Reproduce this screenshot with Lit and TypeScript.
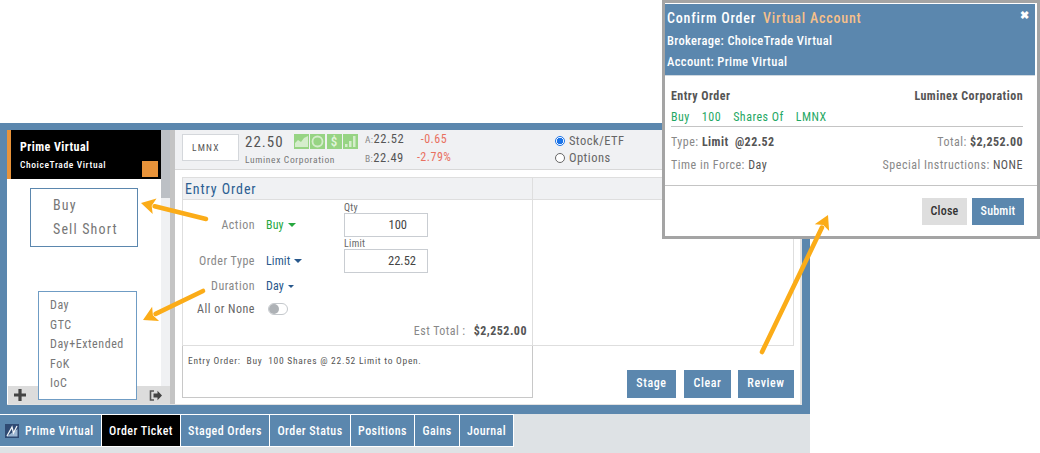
import { LitElement, html, css, svg } from "lit";
import { customElement } from "lit/decorators.js";

const TABS: [string, number][] = [["Order Ticket", 79], ["Staged Orders", 89], ["Order Status", 81], ["Positions", 64], ["Gains", 45], ["Journal", 54]];

@customElement("app-root")
export class AppRoot extends LitElement {
  static styles = css`
    :host {
      display: block;
      position: relative;
      width: 1040px;
      height: 453px;
      overflow: hidden;
      background: #fff;
      font-family: Roboto, "Liberation Sans", sans-serif;
      font-stretch: 78%;
      font-size: 12px;
      letter-spacing: 0.5px;
      color: #666;
    }
    * { box-sizing: border-box; }
    .app { width: 810px; padding-top: 123px; }
    .frame {
      height: 291px;
      background: #5b87ae;
      padding: 7px 8px 9px 7px;
    }
    .inner { display: flex; height: 100%; background: #fff; border-right: 2px solid #e2e2e2; border-bottom: 1px solid #e2e2e2; }
    .side { width: 163px; display: flex; flex-direction: column; flex: none; position: relative; }
    .acct {
      height: 49px;
      margin-right: 9px;
      background: #000;
      border-left: 4px solid #e8933a;
      padding: 9px 0 0 9px;
      color: #fff;
      position: relative;
    }
    .acct b { display: block; font-size: 12px; font-weight: 700; letter-spacing: .45px; line-height: 16px; }
    .acct span { display: block; font-size: 9.5px; font-weight: 500; letter-spacing: .6px; line-height: 15px; margin-top: 2px; }
    .acct i { position: absolute; right: 3px; bottom: 2px; width: 16px; height: 16px; background: #e8933a; }
    .scroll { position: absolute; right: 0; top: 0; bottom: 18px; width: 9px; background: #f0f1f3; }
    .scroll i { display: block; height: 68px; background: #bcc0c5; }
    .side-fill { flex: 1; }
    .side-foot {
      height: 18px;
      margin-left: 1px;
      background: #dcdcdc;
      display: flex;
      align-items: center;
      justify-content: space-between;
      padding: 0 8px 0 6px;
    }
    .gutter { width: 5px; flex: none; background: #c4c4c4; }
    .main { flex: 1; display: flex; flex-direction: column; min-width: 0; }
    .quote {
      height: 40px;
      flex: none;
      background: #f0f1f3;
      border-bottom: 1px solid #d8d8d8;
      display: flex;
      align-items: flex-start;
    }
    .sym {
      width: 57px; height: 27px; margin: 4px 6px 0 7px; flex: none;
      background: #fff; border: 1px solid #d4d7db;
      font-size: 9.5px; line-height: 25px; padding-left: 9px; letter-spacing: 1.2px; color: #555;
    }
    .px { padding-top: 3px; width: 49px; flex: none; }
    .px b { display: block; font-weight: 400; font-size: 15px; line-height: 18px; color: #555; letter-spacing: 1px; white-space: nowrap; }
    .px span { display: block; font-size: 9.5px; line-height: 12px; margin-top: 3px; letter-spacing: .65px; white-space: nowrap; color: #777; }
    .icons { display: flex; gap: 1.3px; margin: 4px 0 0 0; flex: none; }
    .icons div { width: 15px; height: 15px; background: #97d484; }
    .icons svg { display: block; }
    .ic-d { color: #e5f5df; font-size: 13px; line-height: 15px; text-align: center; letter-spacing: 0; font-weight: 500; }
    .bidask { margin: 0 0 0 7px; width: 52px; flex: none; font-size: 12.5px; line-height: 18px; color: #555; white-space: nowrap; }
    .bidask small { font-size: 9.5px; color: #888; }
    .chg { width: 34px; margin-top: 0; text-align: center; font-size: 12px; line-height: 18px; color: #e9705f; white-space: nowrap; flex: none; }
    .radios { margin: 2px 0 0 104px; line-height: 17px; font-size: 12.5px; color: #666; flex: none; }
    .radio { display: flex; align-items: center; gap: 4px; white-space: nowrap; }
    .dot { width: 10px; height: 10px; border-radius: 50%; border: 1px solid #666; display: block; background: #fff; }
    .dot.on { border-color: #1a73e8; background: radial-gradient(circle, #1a73e8 0 3px, #fff 3.5px); }
    .work { flex: 1; display: flex; padding: 7px 0 0 0; min-height: 0; }
    .ticket { width: 351px; margin-left: 7px; flex: none; display: flex; flex-direction: column; }
    .head {
      height: 23px; background: #f0f1f3; border: 1px solid #dedede; flex: none;
      font-size: 14px; line-height: 22px; padding-left: 2px; color: #2c5f92; letter-spacing: .9px; font-weight: 400;
    }
    .form { height: 146px; border-right: 1px solid #dedede; border-left: 1px solid #dedede; border-bottom: 1px solid #dedede; position: relative; flex: none; }
    .rows { display: flex; flex-direction: column; padding-top: 13px; }
    .row { display: flex; align-items: center; height: 24px; }
    .lab { width: 72px; text-align: right; color: #888; white-space: nowrap; }
    .val { margin-left: 11px; display: flex; align-items: center; gap: 4px; color: #28588c; font-size: 12px; letter-spacing: .1px; }
    .val.g { color: #27a83f; }
    .caret { width: 0; height: 0; border: 4px solid transparent; border-top-color: currentColor; border-bottom: 0; }
    .caret.sm { border-width: 3px 3px 0; }
    .toggle { margin-left: 13px; width: 20px; height: 12px; border: 1px solid #c4c8cc; border-radius: 6px; position: relative; background: #fff; }
    .toggle::before { content: ""; position: absolute; left: 0; top: 0; width: 10px; height: 10px; border-radius: 50%; background: #aeb2b6; }
    .m12 { margin-top: 12px; } .m1 { margin-top: 1px; } .mn1 { margin-top: -1px; }
    .dark { color: #666; }
    .entry { position: absolute; left: 161px; top: 2px; width: 84px; }
    .entry label { display: block; font-size: 10px; line-height: 11px; color: #666; letter-spacing: .3px; }
    .entry .in { height: 24px; border: 1px solid #c9cdd2; font-size: 12.5px; text-align: right; line-height: 22px; padding-right: 20px; color: #444; letter-spacing: 0; background: #fff; }
    .entry .in.l { padding-right: 11px; }
    .entry .in + label { margin-top: 1px; }
    .total { position: absolute; right: 5px; bottom: 7px; color: #888; display: flex; gap: 8px; font-size: 12px; letter-spacing: .45px; }
    .total b { color: #555; font-weight: 700; letter-spacing: .5px; }
    .summary { height: 52px; border: 1px solid #c8c8c8; border-top: 0; font-size: 9.5px; padding: 9px 5px; color: #555; letter-spacing: .72px; white-space: nowrap; flex: none; }
    .right { flex: 1; display: flex; flex-direction: column; position: relative; margin-right: 6px; }
    .right .h { height: 23px; background: #f0f1f3; border: 1px solid #dedede; border-left: 0; flex: none; }
    .right .b { height: 146px; border-right: 1px solid #dedede; border-bottom: 1px solid #dedede; flex: none; }
    .actions { position: absolute; right: 0; bottom: 6px; display: flex; gap: 8px; }
    .btn {
      height: 28px; padding-bottom: 2px; background: #5b87ae; color: #fff; font-size: 12px; font-weight: 500;
      display: flex; align-items: center; justify-content: center; letter-spacing: .6px;
    }
    .b-stage { width: 49px; } .b-clear { width: 47px; } .b-review { width: 56px; margin-left: -1px; }
    .tabs { height: 39px; background: #dee2e5; display: flex; align-items: flex-start; }
    .tab {
      height: 33px; background: #5b87ae; color: #fff; display: flex; align-items: center; justify-content: center;
      font-size: 12px; font-weight: 500; border: 1px solid #fff; border-width: 1px 1px 1px 0; letter-spacing: .45px; white-space: nowrap; flex: none;
    }
    .tab.first { width: 102px; justify-content: flex-start; padding-left: 5px; gap: 6px; }
    .tab.first svg { flex: none; }
    .tab.on { background: #000; }
    .pop { position: absolute; background: #fff; border: 1px solid #5b87ae; color: #777; }
    .pop1 { left: 30px; top: 188px; width: 108px; height: 59px; padding: 4px 0 0 22px; font-size: 14px; line-height: 24px; letter-spacing: 1.15px; }
    .pop2 { left: 38px; top: 291px; width: 99px; height: 109px; padding: 4px 0 0 11px; font-size: 12px; line-height: 19.6px; letter-spacing: .55px; border-color: #6f9cc4; }
    .arrows { position: absolute; inset: 0; pointer-events: none; }
    .modal {
      position: absolute; left: 662px; top: 0; width: 378px; height: 239px;
      background: #fff; border: 3px solid #a4a4a4;
      display: flex; flex-direction: column;
      padding: 1px 2px 0 0;
    }
    .mhead { height: 72px; background: #5b87ae; border-bottom: 1px solid #cfd8e0; color: #fff; padding: 5px 0 0 2px; position: relative; flex: none; font-weight: 500; }
    .mhead h3 { margin: 0; font-size: 14px; font-weight: 500; line-height: 18px; letter-spacing: .8px; display: flex; gap: 7px; }
    .mhead h3 span { color: #f6c08a; }
    .mhead div { font-size: 12.5px; line-height: 21px; letter-spacing: .35px; }
    .mhead h3 + div { margin-top: 3px; }
    .x { position: absolute; right: 6px; top: 1px; font-weight: 900; font-size: 11px !important; }
    .mbody { padding: 12px 14px 0 6px; flex: none; height: 110px; margin-right: -2px; border-bottom: 1px solid #c4c4c4; }
    .line { display: flex; justify-content: space-between; white-space: nowrap; }
    .line b { color: #555; font-weight: 700; letter-spacing: .45px; }
    .l1 { line-height: 16px; }
    .l2 { color: #1fa864; line-height: 17px; margin-top: 5px; display: flex; gap: 12px; letter-spacing: .5px; padding-bottom: 0; border-bottom: 1px solid #c4c4c4; }
    .l3 { margin-top: 7px; line-height: 17px; color: #888; }
    .l4 { margin-top: 6px; line-height: 17px; color: #888; }
    .dk { color: #555; }
    .mfoot { flex: 1; display: flex; justify-content: flex-end; align-items: flex-start; gap: 5px; padding: 12px 11px 0 0; }
    .mfoot div { height: 27px; padding-bottom: 1px; display: flex; align-items: center; justify-content: center; font-size: 12px; font-weight: 500; letter-spacing: .2px; }
    .close { width: 45px; background: #dedede; color: #333; }
    .submit { width: 52px; background: #5b87ae; color: #fff; }
  `;

  private arrow(x1: number, y1: number, x2: number, y2: number, w = 4.6) {
    const dx = x2 - x1, dy = y2 - y1, L = Math.hypot(dx, dy);
    const ux = dx / L, uy = dy / L, nx = -uy, ny = ux;
    const head = 14, half = 8;
    const bx = x2 - ux * head, by = y2 - uy * head;
    return svg`<line x1=${x1} y1=${y1} x2=${bx} y2=${by} stroke="#fbac18" stroke-width=${w} stroke-linecap="round"/>
      <polygon fill="#fbac18" points="${x2},${y2} ${bx + nx * half},${by + ny * half} ${bx + ux * 3},${by + uy * 3} ${bx - nx * half},${by - ny * half}"/>`;
  }

  render() {
    return html`
      <div class="app">
        <div class="frame">
          <div class="inner">
            <div class="side">
              <div class="acct"><b>Prime Virtual</b><span>ChoiceTrade Virtual</span><i></i></div>
              <div class="scroll"><i></i></div>
              <div class="side-fill"></div>
              <div class="side-foot">
                <svg width="12" height="12" viewBox="0 0 12 12"><path d="M4.4 0h3.2v4.4H12v3.2H7.6V12H4.4V7.6H0V4.4h4.4z" fill="#444"/></svg>
                <svg width="13" height="11" viewBox="0 0 13 11"><path d="M5 1H1.5v9H5" fill="none" stroke="#555" stroke-width="1.6"/><path d="M4.5 3.6h4V.8L13 5.5 8.5 10.2V7.4h-4z" fill="#444"/></svg>
              </div>
            </div>
            <div class="gutter"></div>
            <div class="main">
              <div class="quote">
                <div class="sym">LMNX</div>
                <div class="px"><b>22.50</b><span>Luminex Corporation</span></div>
                <div class="icons">
                  <div><svg width="15" height="15" viewBox="0 0 15 15"><path d="M1 13V9l3-3 3 2 3-4 4-2v11z" fill="#d5edcc"/></svg></div>
                  <div><svg width="15" height="15" viewBox="0 0 15 15"><circle cx="7.5" cy="7.5" r="5" fill="none" stroke="#d5edcc" stroke-width="1.8"/></svg></div>
                  <div class="ic-d">$</div>
                  <div><svg width="15" height="15" viewBox="0 0 15 15"><path d="M2 10h2.5v3H2zM6 7h2.5v6H6zM10 2h2.5v11H10z" fill="#d5edcc"/></svg></div>
                </div>
                <div class="bidask"><div><small>A:</small>22.52</div><div><small>B:</small>22.49</div></div>
                <div class="chg"><div>-0.65</div><div>-2.79%</div></div>
                <div class="radios">
                  <div class="radio"><span class="dot on"></span>Stock/ETF</div>
                  <div class="radio"><span class="dot"></span>Options</div>
                </div>
              </div>
              <div class="work">
                <div class="ticket">
                  <div class="head">Entry Order</div>
                  <div class="form">
                    <div class="rows">
                      <div class="row"><div class="lab">Action</div><div class="val g">Buy <i class="caret"></i></div></div>
                      <div class="row m12"><div class="lab">Order Type</div><div class="val">Limit <i class="caret"></i></div></div>
                      <div class="row m1"><div class="lab">Duration</div><div class="val">Day <i class="caret sm"></i></div></div>
                      <div class="row mn1"><div class="lab dark">All or None</div><div class="toggle"></div></div>
                    </div>
                    <div class="entry">
                      <label>Qty</label><div class="in">100</div>
                      <label>Limit</label><div class="in l">22.52</div>
                    </div>
                    <div class="total">Est Total : <b>$2,252.00</b></div>
                  </div>
                  <div class="summary">Entry Order:&nbsp; Buy&nbsp; 100 Shares @ 22.52 Limit to Open.</div>
                </div>
                <div class="right">
                  <div class="h"></div><div class="b"></div>
                  <div class="actions">
                    <div class="btn b-stage">Stage</div>
                    <div class="btn b-clear">Clear</div>
                    <div class="btn b-review">Review</div>
                  </div>
                </div>
              </div>
            </div>
          </div>
        </div>
        <div class="tabs">
          <div class="tab first">
            <svg width="14" height="14" viewBox="0 0 14 14"><rect width="14" height="14" fill="#2f4a73"/><path d="M1.5 12.5h11V5z" fill="#9cb6d2"/><path d="M2 12 7 3l1.5 6L12 2" fill="none" stroke="#f0f4f8" stroke-width="1.3"/></svg>
            Prime Virtual
          </div>
          ${TABS.map(([t, w], i) => html`<div class="tab ${i === 0 ? "on" : ""}" style="width:${w}px">${t}</div>`)}
        </div>
      </div>

      <div class="pop pop1"><div>Buy</div><div>Sell Short</div></div>
      <div class="pop pop2"><div>Day</div><div>GTC</div><div>Day+Extended</div><div>FoK</div><div>IoC</div></div>

      <div class="modal">
        <div class="mhead">
          <h3>Confirm Order <span>Virtual Account</span></h3>
          <div>Brokerage: ChoiceTrade Virtual</div>
          <div>Account: Prime Virtual</div>
          <div class="x">✖</div>
        </div>
        <div class="mbody">
          <div class="line l1"><b>Entry Order</b><b>Luminex Corporation</b></div>
          <div class="l2"><span>Buy</span><span>100</span><span>Shares Of</span><span>LMNX</span></div>
          <div class="line l3"><span>Type: <b>Limit&nbsp; @22.52</b></span><span>Total: <b>$2,252.00</b></span></div>
          <div class="line l4"><span>Time in Force: <span class="dk">Day</span></span><span>Special Instructions: <span class="dk">NONE</span></span></div>
        </div>
        <div class="mfoot"><div class="close">Close</div><div class="submit">Submit</div></div>
      </div>

      <svg class="arrows" width="1040" height="453">
        ${this.arrow(206, 219, 141, 203)}
        ${this.arrow(203, 291, 143, 320)}
        ${this.arrow(762, 352, 828, 215)}
      </svg>
    `;
  }
}
